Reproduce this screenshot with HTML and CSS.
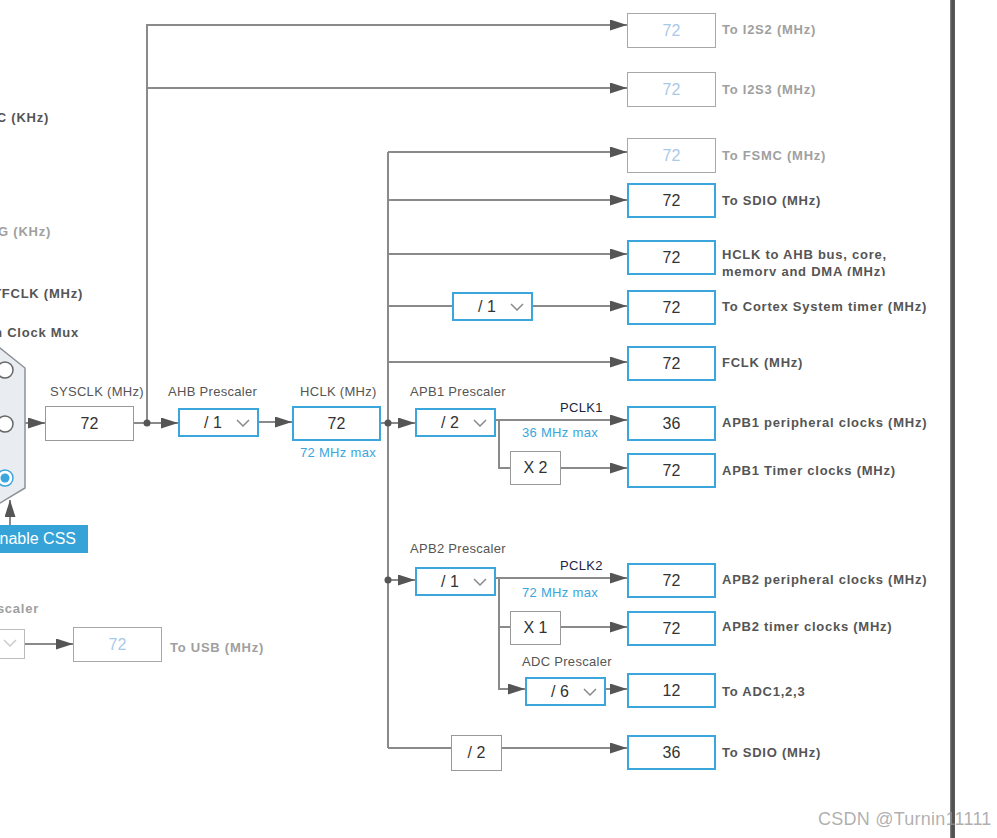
FILE: index.html
```html
<!DOCTYPE html>
<html lang="en">
<head>
  <meta charset="UTF-8">
  <title>Clock Configuration</title>
  <link rel="stylesheet" href="styles.css">
</head>
<body>

  <div class="canvas">

    <!-- wires -->
    <svg class="wires" width="997" height="838" viewBox="0 0 997 838">
      <defs>
        <marker id="arr" markerUnits="userSpaceOnUse" markerWidth="17" markerHeight="11" refX="17" refY="5.5" orient="auto">
          <path d="M0,0 L17,5.5 L0,11 z" fill="#555"/>
        </marker>
      </defs>
      <g fill="none" stroke="#8a8a8a" stroke-width="2">
        <path d="M147,423 V25 H627" marker-end="url(#arr)"/>
        <path d="M147,88 H627" marker-end="url(#arr)"/>
        <path d="M388,152 V748"/>
        <path d="M388,152 H627" marker-end="url(#arr)"/>
        <path d="M388,200 H627" marker-end="url(#arr)"/>
        <path d="M388,254 H627" marker-end="url(#arr)"/>
        <path d="M388,306 H452"/>
        <path d="M533,306 H627" marker-end="url(#arr)"/>
        <path d="M388,362 H627" marker-end="url(#arr)"/>
        <path d="M388,748 H451"/>
        <path d="M502,748 H627" marker-end="url(#arr)"/>

        <path d="M25,423 H45" marker-end="url(#arr)"/>
        <path d="M134,423 H178" marker-end="url(#arr)"/>
        <path d="M258,422 H292" marker-end="url(#arr)"/>
        <path d="M381,423 H415" marker-end="url(#arr)"/>

        <path d="M495,420 H627" marker-end="url(#arr)"/>
        <path d="M499,420 V468 H510"/>
        <path d="M561,468 H627" marker-end="url(#arr)"/>

        <path d="M388,580 H415" marker-end="url(#arr)"/>
        <path d="M495,578 H627" marker-end="url(#arr)"/>
        <path d="M499,578 V689 H525" marker-end="url(#arr)"/>
        <path d="M499,627 H510"/>
        <path d="M561,627 H627" marker-end="url(#arr)"/>
        <path d="M606,689 H627" marker-end="url(#arr)"/>

        <path d="M10,527 V500" marker-end="url(#arr)"/>
        <path d="M25,644 H73" marker-end="url(#arr)"/>
      </g>
      <g fill="#555">
        <circle cx="147" cy="423" r="3.5"/>
        <circle cx="388" cy="423" r="3.5"/>
        <circle cx="388" cy="580" r="3.5"/>
      </g>

      <!-- system clock mux -->
      <polygon points="-30,348 0,348 25,368 25,488 0,503 -30,503" fill="#e9edf1" stroke="#8d9297" stroke-width="1.5"/>
      <circle cx="5" cy="370" r="8" fill="#fff" stroke="#666" stroke-width="1.5"/>
      <circle cx="5" cy="424" r="8" fill="#fff" stroke="#666" stroke-width="1.5"/>
      <circle cx="5" cy="478" r="8" fill="#fff" stroke="#3aa6dc" stroke-width="1.5"/>
      <circle cx="5" cy="478" r="4.5" fill="#3aa6dc"/>
    </svg>

    <!-- left side, cut off by the view -->
    <span class="lbl edge" style="top:110px; right:948px">To RTC (KHz)</span>
    <span class="lbl edge dim" style="top:224px; right:946px">To IWDG (KHz)</span>
    <span class="lbl edge" style="top:286px; right:914px">To FLITFCLK (MHz)</span>
    <span class="lbl edge" style="top:325px; right:918px">System Clock Mux</span>
    <span class="cap edge dim bold" style="top:601px; right:958px">USB Prescaler</span>

    <div class="css-btn">Enable CSS</div>

    <div class="pre off" style="left:-60px; top:629px; width:85px; height:30px"><span>/ 1.5</span><svg class="chev" width="14" height="8" viewBox="0 0 14 8"><polyline points="1,1 7,7 13,1"/></svg></div>
    <div class="box off" style="left:73px; top:627px">72</div>
    <span class="lbl dim" style="left:170px; top:640px">To USB (MHz)</span>

    <!-- sysclk / ahb / hclk -->
    <span class="cap" style="left:50px; top:384px">SYSCLK (MHz)</span>
    <div class="box plain" style="left:45px; top:406px">72</div>

    <span class="cap" style="left:168px; top:384px">AHB Prescaler</span>
    <div class="pre" style="left:178px; top:408px"><span>/ 1</span><svg class="chev" width="14" height="8" viewBox="0 0 14 8"><polyline points="1,1 7,7 13,1"/></svg></div>

    <span class="cap" style="left:300px; top:384px">HCLK (MHz)</span>
    <div class="box" style="left:292px; top:406px">72</div>
    <span class="max" style="left:300px; top:445px">72 MHz max</span>

    <!-- apb1 -->
    <span class="cap" style="left:410px; top:384px">APB1 Prescaler</span>
    <div class="pre" style="left:415px; top:408px"><span>/ 2</span><svg class="chev" width="14" height="8" viewBox="0 0 14 8"><polyline points="1,1 7,7 13,1"/></svg></div>
    <span class="pclk" style="left:560px; top:400px">PCLK1</span>
    <span class="max" style="left:522px; top:425px">36 MHz max</span>
    <div class="mul" style="left:510px; top:451px">X 2</div>

    <!-- apb2 -->
    <span class="cap" style="left:410px; top:541px">APB2 Prescaler</span>
    <div class="pre" style="left:415px; top:567px"><span>/ 1</span><svg class="chev" width="14" height="8" viewBox="0 0 14 8"><polyline points="1,1 7,7 13,1"/></svg></div>
    <span class="pclk" style="left:560px; top:558px">PCLK2</span>
    <span class="max" style="left:522px; top:585px">72 MHz max</span>
    <div class="mul" style="left:510px; top:611px">X 1</div>
    <span class="cap" style="left:522px; top:654px">ADC Prescaler</span>
    <div class="pre" style="left:525px; top:677px"><span>/ 6</span><svg class="chev" width="14" height="8" viewBox="0 0 14 8"><polyline points="1,1 7,7 13,1"/></svg></div>

    <!-- cortex timer / sdio divider -->
    <div class="pre" style="left:452px; top:292px"><span>/ 1</span><svg class="chev" width="14" height="8" viewBox="0 0 14 8"><polyline points="1,1 7,7 13,1"/></svg></div>
    <div class="mul" style="left:451px; top:735px; height:36px">/ 2</div>

    <!-- outputs -->
    <div class="box off" style="left:627px; top:13px">72</div>
    <span class="lbl dim" style="left:722px; top:22px">To I2S2 (MHz)</span>

    <div class="box off" style="left:627px; top:72px">72</div>
    <span class="lbl dim" style="left:722px; top:82px">To I2S3 (MHz)</span>

    <div class="box off" style="left:627px; top:138px">72</div>
    <span class="lbl dim" style="left:722px; top:148px">To FSMC (MHz)</span>

    <div class="box" style="left:627px; top:183px">72</div>
    <span class="lbl" style="left:722px; top:193px">To SDIO (MHz)</span>

    <div class="box" style="left:627px; top:240px">72</div>
    <span class="lbl two" style="left:722px; top:246px">HCLK to AHB bus, core,<br>memory and DMA (MHz)</span>

    <div class="box" style="left:627px; top:290px">72</div>
    <span class="lbl" style="left:722px; top:299px">To Cortex System timer (MHz)</span>

    <div class="box" style="left:627px; top:346px">72</div>
    <span class="lbl" style="left:722px; top:355px">FCLK (MHz)</span>

    <div class="box" style="left:627px; top:406px">36</div>
    <span class="lbl" style="left:722px; top:415px">APB1 peripheral clocks (MHz)</span>

    <div class="box" style="left:627px; top:453px">72</div>
    <span class="lbl" style="left:722px; top:463px">APB1 Timer clocks (MHz)</span>

    <div class="box" style="left:627px; top:563px">72</div>
    <span class="lbl" style="left:722px; top:572px">APB2 peripheral clocks (MHz)</span>

    <div class="box" style="left:627px; top:611px">72</div>
    <span class="lbl" style="left:722px; top:619px">APB2 timer clocks (MHz)</span>

    <div class="box" style="left:627px; top:673px">12</div>
    <span class="lbl" style="left:722px; top:684px">To ADC1,2,3</span>

    <div class="box" style="left:627px; top:735px">36</div>
    <span class="lbl" style="left:722px; top:745px">To SDIO (MHz)</span>

    <div class="splitter"></div>
    <div class="mark">CSDN @Turnin11111</div>
  </div>

</body>
</html>
```

FILE: styles.css
```css
body {
  margin: 0;
  background: #fff;
  font-family: 'Liberation Sans', Arial, sans-serif;
  overflow: hidden;
}

.canvas {
  position: relative;
  width: 997px;
  height: 838px;
  overflow: hidden;
  background: #fff;
}

.wires {
  position: absolute;
  left: 0;
  top: 0;
  overflow: visible;
}

/* output / value boxes */
.box {
  position: absolute;
  box-sizing: border-box;
  width: 89px;
  height: 35px;
  border: 2px solid #3aa6dc;
  background: #fff;
  display: flex;
  align-items: center;
  justify-content: center;
  font-size: 16px;
  color: #333;
}

.box.plain {
  border: 1px solid #999;
}

.box.off {
  border: 1px solid #a8a8a8;
  color: #a9c9e8;
}

/* prescaler dropdowns */
.pre {
  position: absolute;
  box-sizing: border-box;
  width: 81px;
  height: 29px;
  border: 2px solid #3aa6dc;
  background: #fff;
  font-size: 16px;
  color: #333;
  display: flex;
  align-items: center;
  padding-left: 24px;
}

.pre.off {
  border: 1px solid #bbb;
  color: #bbb;
}

.chev {
  position: absolute;
  right: 7px;
  top: 9px;
  fill: none;
  stroke: #8a8a8a;
  stroke-width: 1.5;
}

.pre.off .chev {
  stroke: #ccc;
}

/* multipliers */
.mul {
  position: absolute;
  box-sizing: border-box;
  width: 51px;
  height: 34px;
  border: 1px solid #999;
  background: #fff;
  display: flex;
  align-items: center;
  justify-content: center;
  font-size: 16px;
  color: #333;
}

/* texts */
.lbl {
  position: absolute;
  font-size: 13px;
  font-weight: bold;
  letter-spacing: 0.75px;
  color: #555;
  white-space: nowrap;
  line-height: 16px;
}

.lbl.two {
  height: 30px;
  overflow: hidden;
  line-height: 17px;
}

.dim {
  color: #a0a0a0;
}

.cap {
  position: absolute;
  font-size: 13px;
  letter-spacing: 0.3px;
  color: #555;
  white-space: nowrap;
  line-height: 16px;
}

.cap.bold {
  font-weight: bold;
  letter-spacing: 0.75px;
  color: #a0a0a0;
}

.max {
  position: absolute;
  font-size: 13px;
  letter-spacing: 0.3px;
  color: #3aa6dc;
  white-space: nowrap;
  line-height: 16px;
}

.pclk {
  position: absolute;
  font-size: 13px;
  letter-spacing: 0.3px;
  color: #1a2540;
  line-height: 16px;
}

.css-btn {
  position: absolute;
  right: 909px;
  top: 525px;
  width: 120px;
  height: 28px;
  box-sizing: border-box;
  background: #35a3d8;
  color: #fff;
  font-size: 16px;
  display: flex;
  align-items: center;
  justify-content: flex-end;
  padding-right: 12px;
}

.splitter {
  position: absolute;
  left: 950px;
  top: 0;
  width: 5px;
  height: 838px;
  background: linear-gradient(to right, #888, #4e4e4e 40%, #5a5a5a);
}

.mark {
  position: absolute;
  left: 818px;
  top: 809px;
  font-size: 18px;
  letter-spacing: 0.25px;
  color: rgba(150, 150, 150, 0.75);
  white-space: nowrap;
}
```
